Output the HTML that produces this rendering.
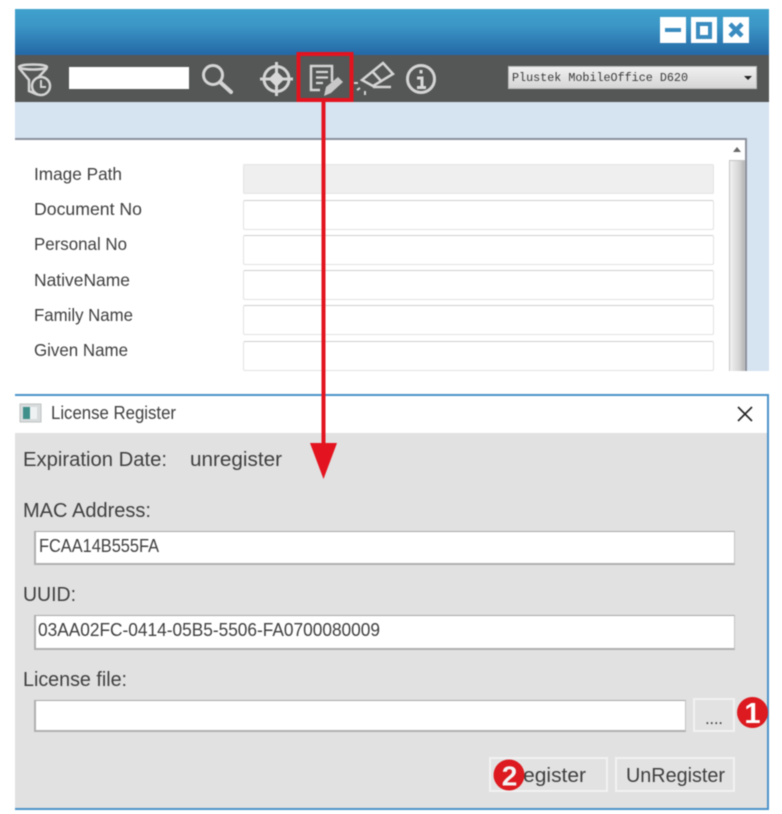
<!DOCTYPE html>
<html>
<head>
<meta charset="utf-8">
<title>License Register</title>
<style>
html,body{margin:0;padding:0;background:#fff}
body{width:782px;height:814px;position:relative;overflow:hidden;font-family:"Liberation Sans",sans-serif}
#w{position:absolute;left:0;top:0;width:782px;height:814px;filter:blur(.45px)}
.a{position:absolute;box-sizing:border-box}
.f{left:243px;width:471px;height:30px;background:#fff;border:1px solid #e2e2e2;border-top-color:#cfcfcf;border-radius:2px}
.i{background:#fff;border:1px solid #a9a9a9;border-bottom:2px solid #b0b0b0;border-left:2px solid #b0b0b0;border-right-color:#c4c4c4}
.b{background:#e2e2e2;border:2px solid #f2f2f2}
svg{position:absolute;left:0;top:0}
text{font-family:"Liberation Sans",sans-serif;fill:#3f3f3f}
</style>
</head>
<body>
<div id="w">
<div class="a" style="left:15px;top:9px;width:754px;height:46px;background:linear-gradient(#40a1cd,#3c97c6 35%,#2468a6)"></div>
<div class="a" style="left:15px;top:55px;width:754px;height:47px;background:#555757"></div>
<div class="a" style="left:15px;top:102px;width:754px;height:269px;background:#d6e3f0"></div>
<div class="a" style="left:15px;top:138px;width:732px;height:233px;background:#fff;border-top:2px solid #8b909e;border-right:2px solid #8d929c"></div>
<div class="a" style="left:729px;top:160px;width:16px;height:211px;background:linear-gradient(90deg,#f2f2f2,#d2d2d2 70%,#b5b5b5);border:1px solid #c4c4c4;border-bottom:0"></div>
<div class="a" style="left:69px;top:67px;width:120px;height:22px;background:#fff"></div>
<div class="a" style="left:508px;top:66px;width:249px;height:23px;background:linear-gradient(#f0f0f0,#d6d6d6);border:1px solid #bbb"></div>
<div class="a" style="left:660px;top:17px;width:26px;height:26px;background:#fff"></div>
<div class="a" style="left:691px;top:17px;width:26px;height:26px;background:#fff"></div>
<div class="a" style="left:723px;top:17px;width:26px;height:26px;background:#fff"></div>
<div class="a f" style="top:164px;background:#efefef;border-color:#e4e4e4"></div>
<div class="a f" style="top:200px"></div>
<div class="a f" style="top:235px"></div>
<div class="a f" style="top:270px"></div>
<div class="a f" style="top:305px"></div>
<div class="a f" style="top:341px"></div>
<div class="a" style="left:15px;top:394px;width:754px;height:416px;background:#fff;border:2px solid #4a93c9;border-left:0"></div>
<div class="a" style="left:15px;top:433px;width:752px;height:375px;background:#e1e1e1"></div>
<div class="a i" style="left:34px;top:531px;width:701px;height:34px"></div>
<div class="a i" style="left:34px;top:615px;width:701px;height:35px"></div>
<div class="a i" style="left:34px;top:700px;width:652px;height:32px"></div>
<div class="a b" style="left:693px;top:698px;width:42px;height:34px"></div>
<div class="a b" style="left:489px;top:757px;width:119px;height:35px"></div>
<div class="a b" style="left:615px;top:757px;width:120px;height:35px"></div>
<svg width="782" height="814" viewBox="0 0 782 814">
<g fill="none" stroke="#d4d4d4" stroke-width="2.500">
<ellipse cx="33" cy="67" rx="14" ry="2.500"/>
<path d="M19 68L29 80V91L36 94V80L47 68"/>
<circle cx="41" cy="86" r="9" fill="#555757"/>
<path d="M41 80V87H46" stroke-width="2"/>
<circle cx="213" cy="75" r="9.500" stroke-width="3"/>
<path d="M220 82L231 92" stroke-width="4" stroke-linecap="round"/>
<circle cx="276.500" cy="79" r="12.500" stroke-width="3"/>
<path d="M276.500 62V96M260 79H293" stroke-width="3"/>
<path d="M276.500 71L284.500 79L276.500 87L268.500 79Z" fill="#d8d8d8" stroke="none"/>
<path d="M332 82V66H311V90H320" stroke-width="2.500"/>
<path d="M316 72H328M316 77.500H328M316 83H323" stroke-width="2.300"/>
<path d="M326 87L338 77L343 82L331 93L324 96Z" fill="#c8c8c8" stroke="none"/>
<path d="M362 80L383 63L393 74L373 86Z" stroke-width="2.500"/>
<path d="M372 71L382 82" stroke-width="2.500"/>
<path d="M373 87H391" stroke-width="2.500"/>
<path d="M354 83H358M357 90L360 88M365 91V95" stroke-width="2"/>
<circle cx="421" cy="79" r="13.500" stroke-width="3"/>
</g>
<path d="M421 70v3.500M417 78h5v9M417 87.500h9" fill="none" stroke="#d8d8d8" stroke-width="3"/>
<path d="M665 30H681" stroke="#3a8cc0" stroke-width="4"/>
<rect x="698" y="24" width="12" height="13" fill="none" stroke="#3a8cc0" stroke-width="4"/>
<path d="M730 24L742 36M742 24L730 36" stroke="#3a8cc0" stroke-width="4.500"/>
<path d="M744 76H752L748 80Z" fill="#222"/>
<path d="M733 152H741L737 147Z" fill="#666"/>
<text x="512" y="81" style="font-family:'Liberation Mono',monospace;font-size:11.700px;fill:#3a3a3a" textLength="176" lengthAdjust="spacingAndGlyphs">Plustek MobileOffice D620</text>
<g font-size="17.500">
<text x="34" y="180" textLength="88" lengthAdjust="spacingAndGlyphs">Image Path</text>
<text x="34" y="215" textLength="108" lengthAdjust="spacingAndGlyphs">Document No</text>
<text x="34" y="250" textLength="93" lengthAdjust="spacingAndGlyphs">Personal No</text>
<text x="34" y="286" textLength="96" lengthAdjust="spacingAndGlyphs">NativeName</text>
<text x="34" y="321" textLength="99" lengthAdjust="spacingAndGlyphs">Family Name</text>
<text x="34" y="356" textLength="94" lengthAdjust="spacingAndGlyphs">Given Name</text>
</g>
<rect x="20" y="404" width="21" height="18" fill="#d8dcdc" stroke="#c0c4c4"/>
<rect x="23" y="407" width="7" height="12" fill="#3f8f8a"/>
<rect x="30" y="407" width="7" height="12" fill="#eef2f2"/>
<text x="51" y="419" font-size="18" textLength="125" lengthAdjust="spacingAndGlyphs">License Register</text>
<path d="M738 407L752 421M752 407L738 421" stroke="#222" stroke-width="1.600"/>
<g font-size="20.500">
<text x="23" y="466" textLength="144" lengthAdjust="spacingAndGlyphs">Expiration Date:</text>
<text x="190" y="466" textLength="92" lengthAdjust="spacingAndGlyphs">unregister</text>
<text x="23" y="517" textLength="128" lengthAdjust="spacingAndGlyphs">MAC Address:</text>
<text x="23" y="601" textLength="53" lengthAdjust="spacingAndGlyphs">UUID:</text>
<text x="23" y="686" textLength="104" lengthAdjust="spacingAndGlyphs">License file:</text>
<text x="508" y="782" textLength="78" lengthAdjust="spacingAndGlyphs">Register</text>
<text x="626" y="782" textLength="99" lengthAdjust="spacingAndGlyphs">UnRegister</text>
</g>
<g font-size="18">
<text x="39" y="552" textLength="120" lengthAdjust="spacingAndGlyphs">FCAA14B555FA</text>
<text x="38" y="636" textLength="342" lengthAdjust="spacingAndGlyphs">03AA02FC-0414-05B5-5506-FA0700080009</text>
<text x="705" y="724" font-size="17" textLength="18" lengthAdjust="spacing">....</text>
</g>
<rect x="298.500" y="54" width="53" height="46" fill="none" stroke="#e3141f" stroke-width="4"/>
<rect x="321.500" y="100" width="4" height="345" fill="#e3141f"/>
<path d="M310 443H337L323.500 479Z" fill="#e3141f"/>
<circle cx="752.500" cy="712.500" r="15.500" fill="#dc1a1f"/>
<circle cx="509" cy="775" r="15.500" fill="#dc1a1f"/>
<text x="752.500" y="723" text-anchor="middle" font-size="29" font-weight="bold" style="fill:#fff">1</text>
<text x="509.500" y="785.500" text-anchor="middle" font-size="28" font-weight="bold" style="fill:#f4f4f4">2</text>
</svg>
</div>
</body>
</html>
